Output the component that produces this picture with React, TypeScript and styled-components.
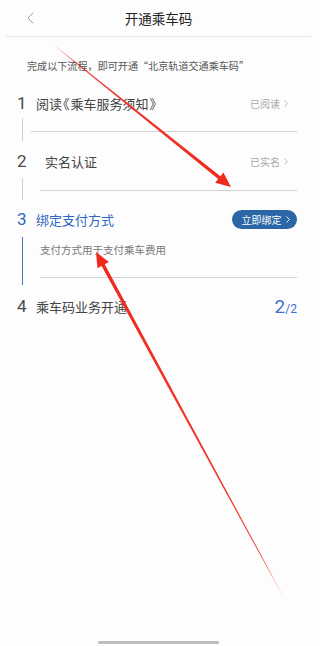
import React from "react";
import styled, { createGlobalStyle } from "styled-components";

const Global = createGlobalStyle`
  html, body { margin: 0; padding: 0; background: #fdfdfd; }
  * { box-sizing: border-box; }
`;

const FONT = `"Noto Sans CJK SC", "Noto Sans", Roboto, sans-serif`;
const BLUE = "#2f66c4";

const Page = styled.div`
  position: relative;
  width: 317px;
  height: 646px;
  background: #fdfdfd;
  font-family: ${FONT};
  display: flex;
  flex-direction: column;
  overflow: hidden;
`;

const Header = styled.div`
  height: 37px;
  margin: 0 6px;
  border-bottom: 1px solid #e6e6e6;
  display: grid;
  grid-template-columns: 1fr auto 1fr;
  align-items: center;
`;

const Back = styled.div`
  padding-left: 21px;
  display: flex;
  align-items: center;
`;

const Title = styled.div`
  font-size: 13.5px;
  color: #222;
  line-height: 1;
  padding-top: 1px;
`;

const Intro = styled.div`
  margin-top: 22px;
  padding-left: 27px;
  font-size: 10.1px;
  color: #555;
  line-height: 14px;
`;

const Steps = styled.div`
  margin-top: 20px;
  display: flex;
  flex-direction: column;
`;

const StepHead = styled.div<{ $top: number }>`
  margin-top: ${(p) => p.$top}px;
  height: 20px;
  padding: 0 20px 0 17px;
  display: flex;
  align-items: center;
`;

const Num = styled.span<{ $active?: boolean }>`
  width: 19px;
  font-family: Roboto, "Noto Sans", sans-serif;
  font-size: 17px;
  color: ${(p) => (p.$active ? BLUE : "#4a4a4a")};
  line-height: 1;
`;

const StepTitle = styled.span<{ $active?: boolean; $indent?: number }>`
  flex: 1;
  margin-left: ${(p) => p.$indent ?? 0}px;
  font-size: 13px;
  color: ${(p) => (p.$active ? BLUE : "#444")};
  line-height: 1;
`;

const Bracket = styled.span`
  font-feature-settings: "halt";
  display: inline-block;
  margin: 0 1px;
`;

const Status = styled.span`
  display: flex;
  align-items: center;
  gap: 4px;
  padding-right: 9px;
  font-size: 10px;
  color: #a8a8a8;
`;

const BindButton = styled.button`
  height: 19px;
  width: 65px;
  border: none;
  border-radius: 10px;
  background: #2b67a6;
  color: #fff;
  font-family: ${FONT};
  font-size: 10px;
  display: flex;
  align-items: center;
  justify-content: center;
  gap: 4px;
  padding: 0 0 0 2px;
`;

const Progress = styled.span`
  color: #3d6fd0;
  font-family: Roboto, "Noto Sans", sans-serif;
  line-height: 1;
  display: flex;
  align-items: baseline;
`;

const ProgBig = styled.span`
  font-size: 19px;
`;

const ProgSmall = styled.span`
  font-size: 12px;
`;

const StepBody = styled.div<{ $top: number; $height: number }>`
  margin-top: ${(p) => p.$top}px;
  height: ${(p) => p.$height}px;
  margin-left: 22px;
  padding-right: 20px;
  display: flex;
`;

const VLine = styled.div<{ $active?: boolean }>`
  width: 1px;
  background: ${(p) => (p.$active ? "#4a78c8" : "#cfcfcf")};
`;

const BodyContent = styled.div<{ $indent: number; $pad: number }>`
  flex: 1;
  margin-left: ${(p) => p.$indent}px;
  padding-top: ${(p) => p.$pad}px;
  display: flex;
  flex-direction: column;
`;

const SubText = styled.div`
  font-size: 10.5px;
  color: #777;
  line-height: 14px;
  margin-bottom: 20px;
`;

const Divider = styled.div`
  height: 1px;
  background: #d2d2d2;
`;

const Spacer = styled.div`
  flex: 1;
`;

const HomeBar = styled.div`
  align-self: center;
  width: 121px;
  height: 3px;
  border-radius: 2px;
  background: #bdbdbd;
  margin-bottom: 2px;
`;

const Overlay = styled.svg`
  position: absolute;
  left: 0;
  top: 0;
  pointer-events: none;
`;

const Chevron = ({ color, w = 4, h = 7 }: { color: string; w?: number; h?: number }) => (
  <svg width={w} height={h} viewBox={`0 0 ${w} ${h}`}>
    <path d={`M0.5 0.5 L${w - 0.5} ${h / 2} L0.5 ${h - 0.5}`} fill="none" stroke={color} strokeWidth="0.9" />
  </svg>
);

type P = [number, number];

function arrowPoints(tail: P, tip: P, headLen: number, headHalf: number, tailW: number, shaftW: number) {
  const dx = tip[0] - tail[0];
  const dy = tip[1] - tail[1];
  const len = Math.hypot(dx, dy);
  const ux = dx / len;
  const uy = dy / len;
  const px = -uy;
  const py = ux;
  const bx = tip[0] - ux * headLen;
  const by = tip[1] - uy * headLen;
  const pts: P[] = [
    [tail[0] + (px * tailW) / 2, tail[1] + (py * tailW) / 2],
    [bx + (px * shaftW) / 2, by + (py * shaftW) / 2],
    [bx + px * headHalf, by + py * headHalf],
    [tip[0], tip[1]],
    [bx - px * headHalf, by - py * headHalf],
    [bx - (px * shaftW) / 2, by - (py * shaftW) / 2],
    [tail[0] - (px * tailW) / 2, tail[1] - (py * tailW) / 2],
  ];
  return pts.map((p) => `${p[0].toFixed(1)},${p[1].toFixed(1)}`).join(" ");
}

const arrows: { tail: P; tip: P; id: string }[] = [
  { tail: [55, 46], tip: [231, 187], id: "a1" },
  { tail: [284, 598], tip: [96, 252], id: "a2" },
];

export default function App() {
  return (
    <>
      <Global />
      <Page>
        <Header>
          <Back>
            <svg width="7" height="12" viewBox="0 0 7 12">
              <path d="M6 0.8 L1 6 L6 11.2" fill="none" stroke="#9a9a9a" strokeWidth="1" />
            </svg>
          </Back>
          <Title>开通乘车码</Title>
          <span />
        </Header>

        <Intro>完成以下流程，即可开通“北京轨道交通乘车码”</Intro>

        <Steps>
          <StepHead $top={0}>
            <Num>1</Num>
            <StepTitle>
              阅读<Bracket>《</Bracket>乘车服务须知<Bracket>》</Bracket>
            </StepTitle>
            <Status>
              已阅读 <Chevron color="#b0b0b0" />
            </Status>
          </StepHead>
          <StepBody $top={5} $height={23}>
            <VLine />
            <BodyContent $indent={8} $pad={13}>
              <Divider />
            </BodyContent>
          </StepBody>

          <StepHead $top={10}>
            <Num>2</Num>
            <StepTitle $indent={9}>实名认证</StepTitle>
            <Status>
              已实名 <Chevron color="#b0b0b0" />
            </Status>
          </StepHead>
          <StepBody $top={7} $height={22}>
            <VLine />
            <BodyContent $indent={17} $pad={12}>
              <Divider />
            </BodyContent>
          </StepBody>

          <StepHead $top={9}>
            <Num $active>3</Num>
            <StepTitle $active>绑定支付方式</StepTitle>
            <BindButton>
              立即绑定 <Chevron color="#ffffff" />
            </BindButton>
          </StepHead>
          <StepBody $top={8} $height={48}>
            <VLine $active />
            <BodyContent $indent={17} $pad={6}>
              <SubText>支付方式用于支付乘车费用</SubText>
              <Divider />
            </BodyContent>
          </StepBody>

          <StepHead $top={11}>
            <Num>4</Num>
            <StepTitle>乘车码业务开通</StepTitle>
            <Progress>
              <ProgBig>2</ProgBig>
              <ProgSmall>/2</ProgSmall>
            </Progress>
          </StepHead>
        </Steps>

        <Spacer />
        <HomeBar />

        <Overlay width="317" height="646" viewBox="0 0 317 646">
          <defs>
            {arrows.map((a) => (
              <linearGradient
                key={a.id}
                id={a.id}
                gradientUnits="userSpaceOnUse"
                x1={a.tail[0]}
                y1={a.tail[1]}
                x2={a.tip[0]}
                y2={a.tip[1]}
              >
                <stop offset="0" stopColor="#f0281c" stopOpacity="0.15" />
                <stop offset="0.12" stopColor="#f0281c" stopOpacity="0.9" />
                <stop offset="1" stopColor="#f0281c" stopOpacity="1" />
              </linearGradient>
            ))}
          </defs>
          {arrows.map((a) => (
            <polygon key={a.id} points={arrowPoints(a.tail, a.tip, 15, 6.5, 0.4, 3.6)} fill={`url(#${a.id})`} />
          ))}
        </Overlay>
      </Page>
    </>
  );
}
